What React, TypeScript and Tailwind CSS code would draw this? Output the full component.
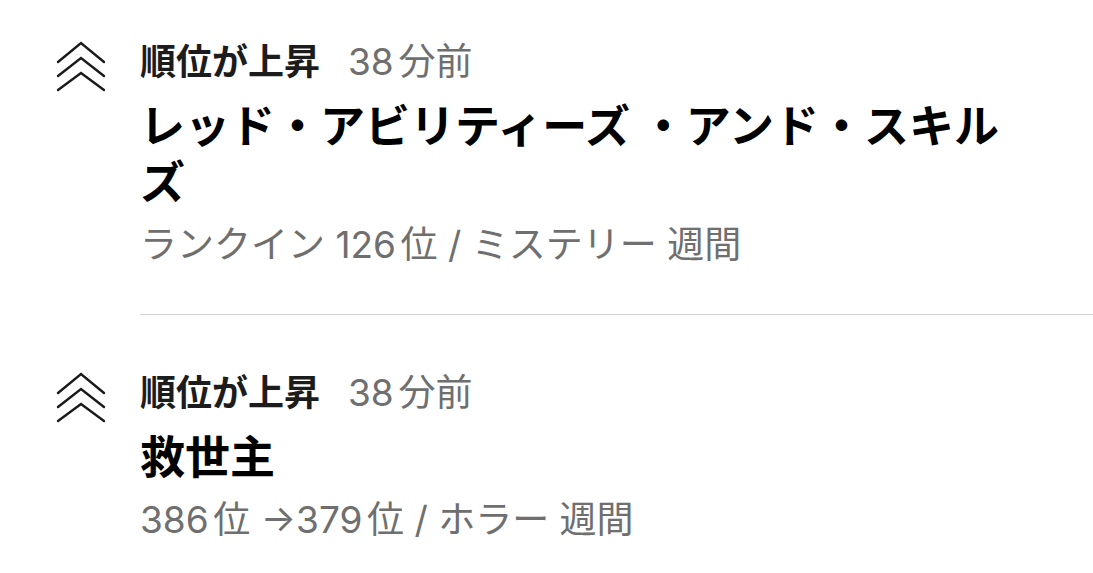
import React from 'react';

type RankingNotice = {
  id: number;
  label: string;
  time: string;
  title: string;
  detail: string;
};

const notices: RankingNotice[] = [
  {
    id: 1,
    label: '順位が上昇',
    time: '38分前',
    title: 'レッド・アビリティーズ ・アンド・スキルズ',
    detail: 'ランクイン 126位 / ミステリー 週間',
  },
  {
    id: 2,
    label: '順位が上昇',
    time: '38分前',
    title: '救世主',
    detail: '386位 →379位 / ホラー 週間',
  },
];

// Triple chevron used as the "rank went up" marker
function RankUpIcon() {
  return (
    <svg width="50" height="52" viewBox="0 0 50 52" fill="none" stroke="#1a1a1a" strokeWidth="2.4" strokeLinecap="round" strokeLinejoin="miter">
      <polyline points="2,21 25,2 48,21" />
      <polyline points="2,35 25,17 48,35" />
      <polyline points="2,49 25,32 48,49" />
    </svg>
  );
}

function NoticeRow({ notice, isLast }: { notice: RankingNotice; isLast: boolean }) {
  return (
    <li className="group flex">
      <div className="w-[140px] shrink-0 pl-[56px] pt-[57px] group-first:pt-[41px]">
        <RankUpIcon />
      </div>
      <div
        className={`flex-1 pt-[54px] group-first:pt-[38px] ${isLast ? 'pb-[40px]' : 'pb-[45px] border-b border-[#d4d4d4]'}`}
      >
        <div className="flex items-center gap-[28px] leading-[48px]">
          <span className="text-[36px] font-bold text-[#1c1c1c]">{notice.label}</span>
          <span className="text-[37px] text-[#6f6f6f] [text-autospace:normal]">{notice.time}</span>
        </div>
        <h2 className="mt-[13px] max-w-[880px] text-[45px] font-bold leading-[56px] text-black">
          {notice.title}
        </h2>
        <p className="mt-[10px] text-[37px] leading-[48px] text-[#6f6f6f] [text-autospace:normal]">
          {notice.detail}
        </p>
      </div>
    </li>
  );
}

export default function App() {
  return (
    <div className="min-h-screen bg-white font-['Inter','Noto_Sans_CJK_JP',sans-serif]">
      <ul>
        {notices.map((n, i) => (
          <NoticeRow key={n.id} notice={n} isLast={i === notices.length - 1} />
        ))}
      </ul>
    </div>
  );
}
